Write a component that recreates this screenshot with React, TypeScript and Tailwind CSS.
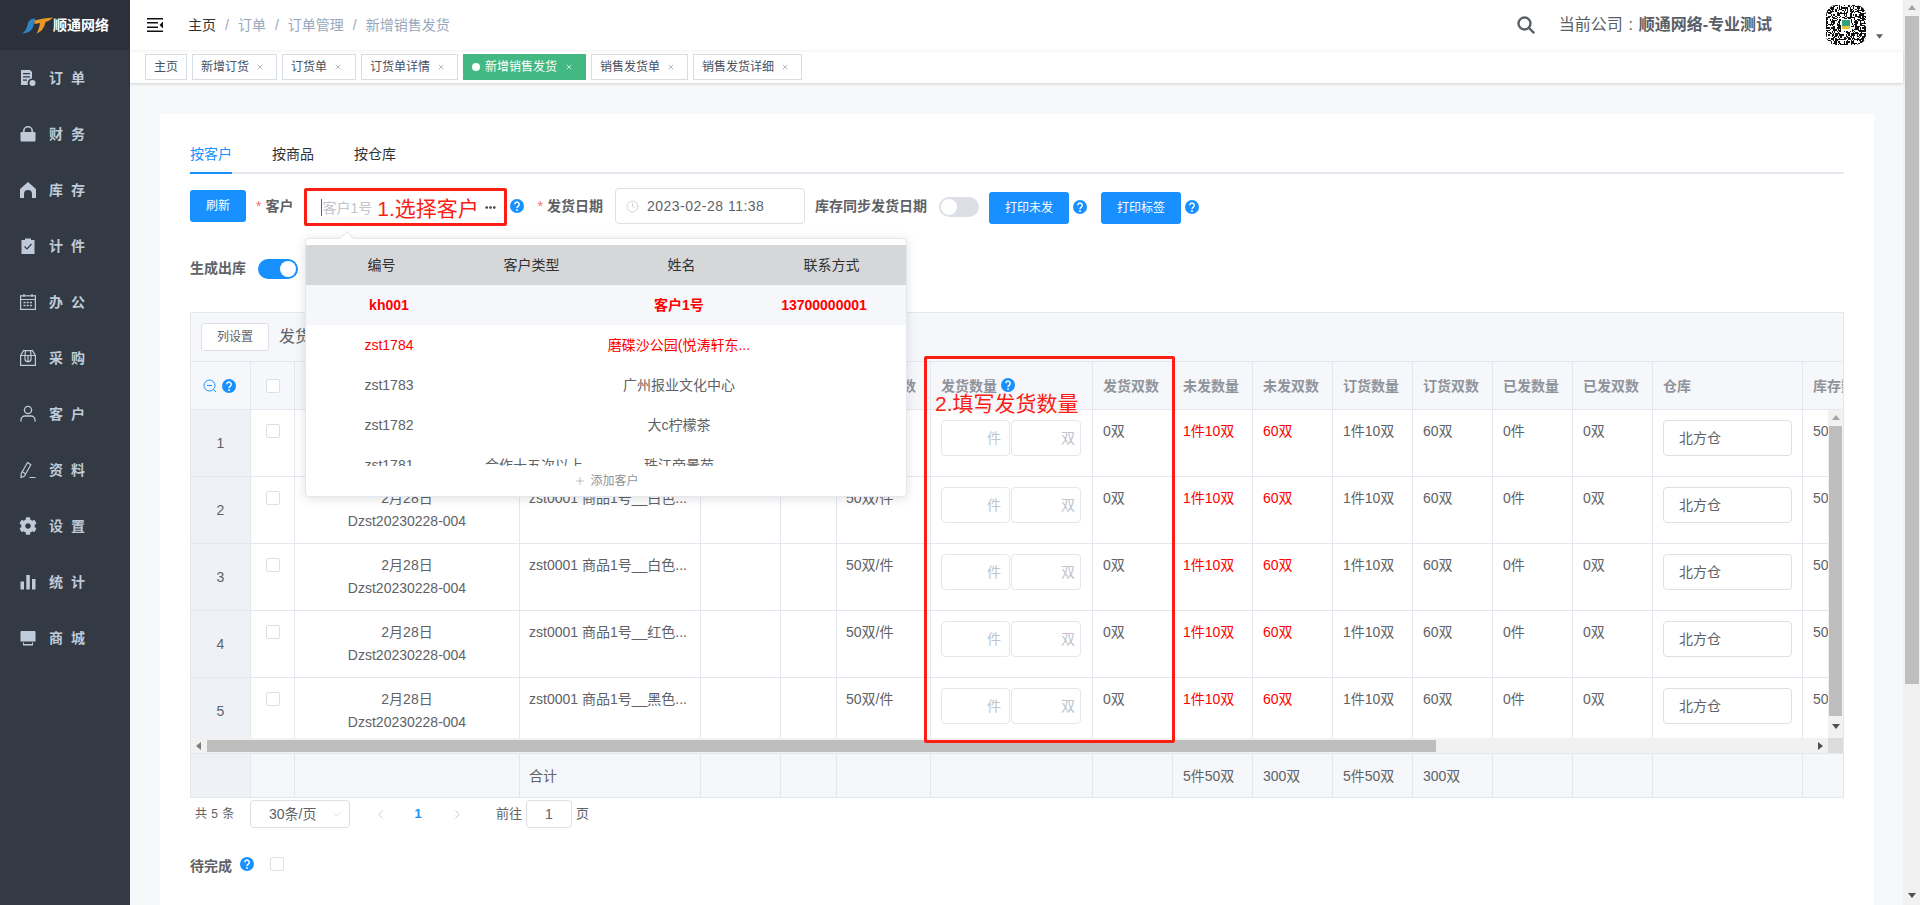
import { ChevronDown, ChevronLeft, ChevronRight, Clock, Ellipsis, Plus, X } from 'lucide-react';
import { FaCog } from 'react-icons/fa';

const GRID =
  'grid w-[1712px] grid-cols-[60px_44px_225px_181px_80px_56px_94px_162px_80px_80px_80px_80px_80px_80px_80px_150px_100px]';
const CELL = 'border-r border-b border-[#e4e7ed]';

const MENU: [string, React.ReactNode][] = [
  [
    '订单',
    <svg viewBox="0 0 18 18" className="w-[18px] h-[18px]" fill="currentColor">
      <path d="M2 1h9l2 2v6.5a4.5 4.5 0 0 0-4 6.5H2zM4 4v1.3h7V4zm0 3.2v1.3h7V7.200zm0 3.200v1.300h4v-1.300z" fillRule="evenodd" />
      <circle cx="13.500" cy="14" r="3" />
    </svg>,
  ],
  [
    '财务',
    <svg viewBox="0 0 18 18" className="w-[18px] h-[18px]" fill="currentColor">
      <path d="M4 7V6a5 5 0 0 1 10 0v1h-1.600V6a3.400 3.400 0 0 0-6.800 0v1z" />
      <rect x="1.500" y="7" width="15" height="9.500" rx="1" />
    </svg>,
  ],
  [
    '库存',
    <svg viewBox="0 0 18 18" className="w-[18px] h-[18px]" fill="currentColor">
      <path d="M9 1 17 8v9h-4v-4a4 4 0 0 0-8 0v4H1V8z" />
    </svg>,
  ],
  [
    '计件',
    <svg viewBox="0 0 18 18" className="w-[18px] h-[18px]" fill="none">
      <path d="M2.500 3H6V1.500h6V3h3.500v14h-13z" fill="currentColor" />
      <path d="m5.500 9.500 2.500 2.500 4.500-5" stroke="#333a44" strokeWidth="1.200" />
    </svg>,
  ],
  [
    '办公',
    <svg viewBox="0 0 18 18" className="w-[18px] h-[18px]" fill="none" stroke="currentColor" strokeWidth="1.200">
      <rect x="1.600" y="2.800" width="14.800" height="13.600" />
      <path d="M1.600 6.500h14.800M5 1v3M13 1v3" />
      <path d="M4.500 9.500h9M4.500 12.500h9" strokeWidth="1.600" strokeDasharray="2 1.200" />
    </svg>,
  ],
  [
    '采购',
    <svg viewBox="0 0 18 18" className="w-[18px] h-[18px]" fill="none" stroke="currentColor" strokeWidth="1.200">
      <path d="M1.600 6.500 4.500 1.600h9l2.900 4.900v9.900H1.600zM1.600 6.500h14.800" />
      <path d="M6.500 1.800 6 6.500v3.500a3 2.600 0 0 0 6 0V6.500l-.5-4.700M9 6.500v7" />
    </svg>,
  ],
  [
    '客户',
    <svg viewBox="0 0 18 18" className="w-[18px] h-[18px]" fill="none" stroke="currentColor" strokeWidth="1.300">
      <circle cx="9" cy="5" r="3.600" />
      <path d="M2 16.500v-1.500a4 4 0 0 1 4-4h6a4 4 0 0 1 4 4v1.500" />
    </svg>,
  ],
  [
    '资料',
    <svg viewBox="0 0 18 18" className="w-[18px] h-[18px]" fill="none" stroke="currentColor" strokeWidth="1.200">
      <path d="M8.500 1.500 11.800 3.800 5.500 15 2 16.500l.3-4z" />
      <path d="M2.800 10.500 7 13M10.500 16.500h6" />
    </svg>,
  ],
  ['设置', <FaCog className="w-[18px] h-[18px]" />],
  [
    '统计',
    <svg viewBox="0 0 18 18" className="w-[18px] h-[18px]" fill="currentColor">
      <rect x="1.500" y="8.500" width="3.500" height="8" />
      <rect x="7.300" y="2" width="3.500" height="14.500" />
      <rect x="13" y="6" width="3.500" height="10.500" />
    </svg>,
  ],
  [
    '商城',
    <svg viewBox="0 0 18 18" className="w-[18px] h-[18px]" fill="currentColor">
      <path d="M2.500 2h13a1 1 0 0 1 1 1v9.500h-15V3a1 1 0 0 1 1-1z" />
      <path d="M4 13.500h10V16.500H4zM5 13.500v1.500h8v-1.500z" fillRule="evenodd" />
    </svg>,
  ],
];

const HEADERS = ['未发数量', '未发双数', '订货数量', '订货双数', '已发数量', '已发双数'];
const COLORS = ['白色', '白色', '白色', '红色', '黑色'];

const CUSTOMERS = [
  { code: 'zst1784', type: '', name: '磨碟沙公园(悦涛轩东...', tone: 'text-[#ff0000]' },
  { code: 'zst1783', type: '', name: '广州报业文化中心', tone: 'text-[#606266]' },
  { code: 'zst1782', type: '', name: '大c柠檬茶', tone: 'text-[#606266]' },
  { code: 'zst1781', type: '合作十五次以上', name: '珠江帝景苑', tone: 'text-[#606266]' },
];

// fake qr pattern for the avatar
const QR: [number, number][] = [];
let seed = 17;
for (let y = 0; y < 34; y++) {
  for (let x = 0; x < 34; x++) {
    seed = (seed * 1103515245 + 12345) % 2147483648;
    if (seed % 100 < 55) QR.push([x, y]);
  }
}

function Help({ className = '' }: { className?: string }) {
  return (
    <svg viewBox="0 0 14 14" className={`w-[14px] h-[14px] shrink-0 ${className}`}>
      <circle cx="7" cy="7" r="7" fill="#1890ff" />
      <path d="M4.800 5.300a2.200 2.200 0 1 1 3.500 1.800c-.9.600-1.300 1-1.300 2" fill="none" stroke="#fff" strokeWidth="1.500" />
      <circle cx="7" cy="11" r=".9" fill="#fff" />
    </svg>
  );
}

function Switch({ on }: { on?: boolean }) {
  return (
    <div className={`w-[40px] h-[20px] rounded-full p-[2px] flex shrink-0 ${on ? 'bg-[#1890ff] justify-end' : 'bg-[#dcdfe6]'}`}>
      <div className="w-[16px] h-[16px] rounded-full bg-white" />
    </div>
  );
}

function Box() {
  return <div className="w-[14px] h-[14px] rounded-[2px] border border-[#dcdfe6] bg-white" />;
}

function PrimaryButton({ children, className = '' }: { children: React.ReactNode; className?: string }) {
  return (
    <button className={`h-[32px] rounded-[3px] bg-[#1890ff] text-white text-xs shrink-0 ${className}`}>{children}</button>
  );
}

function Tab({ label, wide }: { label: string; wide?: boolean }) {
  return (
    <div className={`h-[26px] border border-[#d8dce5] bg-white pl-[8px] flex items-center text-xs text-[#495060] ${wide ? 'pr-[9px]' : 'pr-[8px]'}`}>
      {label}
      <span className="ml-[3px] w-[16px] flex justify-center text-[#909399]">
        <X size={8} />
      </span>
    </div>
  );
}

function Row({ index, color }: { index: number; color: string }) {
  return (
    <div className={`${GRID} h-[67px] text-[#606266]`}>
      <div className={`${CELL} bg-[#eef1f6] flex items-center justify-center`}>{index}</div>
      <div className={`${CELL} pl-[15px] pt-[14px]`}>
        <Box />
      </div>
      <div className={`${CELL} pt-[10px] text-center leading-[23px]`}>
        <div>2月28日</div>
        <div>Dzst20230228-004</div>
      </div>
      <div className={`${CELL} pl-[9px] pt-[10px] leading-[23px]`}>zst0001 商品1号__{color}...</div>
      <div className={CELL} />
      <div className={CELL} />
      <div className={`${CELL} pl-[9px] pt-[10px] leading-[23px]`}>50双/件</div>
      <div className={`${CELL} pl-[10px] pt-[10px] flex gap-[1px] items-start`}>
        <div className="w-[69px] h-[36px] rounded border border-[#e4e7ed] flex items-center justify-end pr-[8px] text-[#c0c4cc]">件</div>
        <div className="w-[70px] h-[36px] rounded border border-[#e4e7ed] flex items-center justify-end pr-[5px] text-[#c0c4cc]">双</div>
      </div>
      <div className={`${CELL} pl-[10px] pt-[10px] leading-[23px]`}>0双</div>
      <div className={`${CELL} pl-[10px] pt-[10px] leading-[23px] text-[#ff0000]`}>1件10双</div>
      <div className={`${CELL} pl-[10px] pt-[10px] leading-[23px] text-[#ff0000]`}>60双</div>
      <div className={`${CELL} pl-[10px] pt-[10px] leading-[23px]`}>1件10双</div>
      <div className={`${CELL} pl-[10px] pt-[10px] leading-[23px]`}>60双</div>
      <div className={`${CELL} pl-[10px] pt-[10px] leading-[23px]`}>0件</div>
      <div className={`${CELL} pl-[10px] pt-[10px] leading-[23px]`}>0双</div>
      <div className={`${CELL} pl-[10px] pt-[10px]`}>
        <div className="w-[129px] h-[36px] rounded border border-[#dcdfe6] flex items-center pl-[15px]">北方仓</div>
      </div>
      <div className={`${CELL} pl-[10px] pt-[10px] leading-[23px]`}>50件</div>
    </div>
  );
}

function CustomerDropdown() {
  return (
    <div className="absolute left-[1px] top-[50px] z-20 w-[602px] h-[259px] bg-white border border-[#e4e7ed] rounded shadow-[0_2px_12px_rgba(0,0,0,0.12)] pt-[6px] text-sm font-normal">
      <div className="absolute left-[36px] -top-[6px] w-[10px] h-[10px] rotate-45 bg-white border-l border-t border-[#e4e7ed]" />
      <div className="relative grid grid-cols-4 h-[40px] bg-[#d6d7d9] text-[#303133] text-center leading-[40px]">
        <div>编号</div>
        <div>客户类型</div>
        <div>姓名</div>
        <div>联系方式</div>
      </div>
      <div className="h-[181px] overflow-hidden">
        <div className="grid grid-cols-4 h-[40px] bg-[#f5f7fa] px-[10px] text-center leading-[40px] text-[#ff0000] font-bold">
          <div>kh001</div>
          <div />
          <div>客户1号</div>
          <div>13700000001</div>
        </div>
        {CUSTOMERS.map((c) => (
          <div key={c.code} className={`grid grid-cols-4 h-[40px] px-[10px] text-center leading-[40px] ${c.tone}`}>
            <div>{c.code}</div>
            <div>{c.type}</div>
            <div>{c.name}</div>
            <div />
          </div>
        ))}
      </div>
      <div className="h-[30px] flex items-center justify-center gap-[4px] text-xs text-[#909399]">
        <Plus size={12} strokeWidth={1.2} />
        添加客户
      </div>
    </div>
  );
}

function Triangle({ dir, tone }: { dir: 'up' | 'down' | 'left' | 'right'; tone: string }) {
  const points = { up: '4,1 8,6 0,6', down: '0,1 8,1 4,6', left: '6,0 6,8 1,4', right: '1,0 1,8 6,4' }[dir];
  return (
    <svg viewBox="0 0 8 8" className="w-[8px] h-[8px]" fill={tone}>
      <polygon points={points} />
    </svg>
  );
}

export default function App() {
  return (
    <div className="flex w-[1920px] h-[905px] overflow-hidden bg-[#f7f8fa] text-sm text-[#606266] font-['Liberation_Sans','Noto_Sans_CJK_SC',sans-serif]">
      <aside className="w-[130px] shrink-0 bg-[#333a44] text-[#bfcbd9]">
        <div className="h-[50px] bg-[#2b303b] flex items-center pl-[22px]">
          <svg viewBox="0 0 31 17" className="w-[31px] h-[17px]">
            <path d="M0 16.500C3 15 4.500 12 5.500 8 6.500 3.500 9 1.500 13.500 1.500 12.500 4 12 6.500 11 10 10 13.500 6 16.500 0 16.500z" fill="#2f86c4" />
            <path d="M12.500 3.500C18 2 25 .8 31 .5 29 2.800 26.500 4.200 23.500 5 22.500 9.500 20.500 14.500 14.500 16.500 16.500 13 17.500 9.500 18 6 16.500 6.200 14.500 6.500 12.500 7z" fill="#e8962a" />
          </svg>
          <span className="text-white font-bold leading-none">顺通网络</span>
        </div>
        {MENU.map(([label, icon]) => (
          <div key={label} className="h-[56px] flex items-center pl-[19px]">
            <span className="w-[30px] shrink-0">{icon}</span>
            <span className="font-bold tracking-[8px] whitespace-nowrap">{label}</span>
          </div>
        ))}
      </aside>

      <main className="w-[1773px] shrink-0 flex flex-col">
        <header className="relative z-10 h-[50px] bg-white shadow-[0_1px_3px_rgba(0,21,41,0.06)] flex items-center pl-[17px]">
          <svg viewBox="0 0 16 14" className="w-[16px] h-[14px]" fill="#111">
            <rect width="16" height="1.500" />
            <rect y="4" width="11" height="1.500" />
            <rect y="8.500" width="11" height="1.500" />
            <polygon points="16,3.500 12.500,7 16,10.500" />
            <rect y="12.500" width="16" height="1.500" />
          </svg>
          <nav className="ml-[25px] flex text-[#97a8be]">
            <span className="text-[#303133]">主页</span>
            <span className="mx-[9px]">/</span>
            <span>订单</span>
            <span className="mx-[9px]">/</span>
            <span>订单管理</span>
            <span className="mx-[9px]">/</span>
            <span>新增销售发货</span>
          </nav>
          <div className="ml-auto flex items-center text-[#5a5e66]">
            <svg viewBox="0 0 18 18" className="w-[18px] h-[18px]" fill="none" stroke="#5a5e66" strokeWidth="2.400">
              <circle cx="7.500" cy="7.500" r="6" />
              <path d="m12 12 5.200 5.200" />
            </svg>
            <span className="ml-[24px] text-base">当前公司</span>
            <span className="w-[16px] text-center text-base">:</span>
            <span className="text-base font-bold">顺通网络-专业测试</span>
            <div className="ml-[54px] w-[40px] h-[40px] rounded-[10px] overflow-hidden">
              <svg viewBox="0 0 34 34" className="w-[40px] h-[40px]" shapeRendering="crispEdges">
                <rect width="34" height="34" fill="#fff" />
                {QR.map(([x, y]) => (
                  <rect key={`${x}-${y}`} x={x} y={y} width="1" height="1" fill="#111" />
                ))}
                <rect x="13" y="12" width="8" height="10" fill="#fff" />
                <rect x="14" y="13" width="6" height="5" fill="#2fa37c" />
                <rect x="14" y="18" width="6" height="2" fill="#e8c53a" />
              </svg>
            </div>
            <svg viewBox="0 0 8 5" className="ml-[10px] mt-[22px] mr-[20px] w-[7px] h-[5px]" fill="#5a5e66">
              <polygon points="0,0 8,0 4,5" />
            </svg>
          </div>
        </header>

        <div className="relative h-[33px] bg-white shadow-[0_1px_3px_rgba(0,0,0,0.16)] pl-[15px] pt-[4px] flex gap-[5px] items-start">
          <div className="h-[26px] border border-[#d8dce5] px-[8px] flex items-center text-xs text-[#495060]">主页</div>
          <Tab label="新增订货" />
          <Tab label="订货单" wide />
          <Tab label="订货单详情" />
          <div className="h-[26px] border border-[#42b983] bg-[#42b983] text-white pl-[8px] pr-[8px] flex items-center text-xs">
            <span className="w-[8px] h-[8px] rounded-full bg-white mr-[5px]" />
            新增销售发货
            <span className="ml-[4px] w-[16px] flex justify-center">
              <X size={8} />
            </span>
          </div>
          <Tab label="销售发货单" />
          <Tab label="销售发货详细" />
        </div>

        <div className="flex-1 min-h-0 pt-[31px] pl-[30px] pr-[29px]">
          <section className="h-full bg-white px-[30px] pt-[26px]">
            <div className="flex gap-[40px] h-[34px] border-b-2 border-[#e4e7ed] text-[#303133] leading-[28px]">
              <div className="h-[34px] border-b-2 border-[#1890ff] text-[#1890ff]">按客户</div>
              <div>按商品</div>
              <div>按仓库</div>
            </div>

            <div className="mt-[14px] h-[36px] flex items-center font-bold">
              <PrimaryButton className="w-[56px] font-normal">刷新</PrimaryButton>
              <span className="ml-[10px] mr-[4px] text-[#f56c6c] font-normal">*</span>
              <span>客户</span>
              <div className="relative ml-[11px] w-[203px] h-[38px] self-start">
                <div className="h-[38px] border-[3px] border-[#fa1e14] rounded-[2px] flex items-center pl-[14px] font-normal">
                  <span className="w-[1px] h-[17px] bg-[#606266]" />
                  <span className="mt-[2px] text-[#c0c4cc]">客户1号</span>
                  <span className="ml-[5px] mt-[4px] text-[21px] leading-[28px] text-[#fa1e14] whitespace-nowrap">1.选择客户</span>
                  <Ellipsis size={13} strokeWidth={3} className="ml-[5px] text-[#303133]" />
                </div>
                <CustomerDropdown />
              </div>
              <Help className="ml-[3px]" />
              <span className="ml-[13px] mr-[4px] text-[#f56c6c] font-normal">*</span>
              <span>发货日期</span>
              <div className="ml-[12px] w-[190px] h-[36px] border border-[#dcdfe6] rounded flex items-center pl-[10px] font-normal">
                <Clock size={13} strokeWidth={1.3} className="text-[#c0c4cc]" />
                <span className="ml-[8px] tracking-[0.5px]">2023-02-28 11:38</span>
              </div>
              <span className="ml-[10px]">库存同步发货日期</span>
              <div className="ml-[12px] mt-[2px]">
                <Switch />
              </div>
              <PrimaryButton className="ml-[10px] mt-[4px] w-[80px] font-normal">打印未发</PrimaryButton>
              <Help className="ml-[4px] mt-[2px]" />
              <PrimaryButton className="ml-[14px] mt-[4px] w-[80px] font-normal">打印标签</PrimaryButton>
              <Help className="ml-[4px] mt-[2px]" />
            </div>

            <div className="mt-[34px] h-[22px] flex items-center">
              <span className="font-bold mb-[2px]">生成出库</span>
              <div className="ml-[12px]">
                <Switch on />
              </div>
            </div>

            <div className="relative mt-[32px] w-[1654px] border border-[#e4e7ed]">
              <div className="h-[49px] bg-[#f5f7fa] border-b border-[#e4e7ed] flex items-center pl-[10px]">
                <div className="w-[68px] h-[28px] bg-white border border-[#dcdfe6] rounded-[3px] flex items-center justify-center text-xs">列设置</div>
                <span className="ml-[10px] text-base">发货明细</span>
              </div>

              <div className="overflow-hidden">
                <div className={`${GRID} h-[48px] bg-[#f5f7fa] font-bold text-[#909399]`}>
                  <div className={`${CELL} flex items-center gap-[5px] pl-[12px]`}>
                    <svg viewBox="0 0 14 14" className="w-[14px] h-[14px]" fill="none" stroke="#1890ff" strokeWidth="1">
                      <circle cx="6.500" cy="6.500" r="5.500" />
                      <path d="M4 6.500h5M10.500 10.500l2.500 2.500" />
                    </svg>
                    <Help />
                  </div>
                  <div className={`${CELL} pl-[15px] flex items-center`}>
                    <Box />
                  </div>
                  <div className={CELL} />
                  <div className={CELL} />
                  <div className={CELL} />
                  <div className={CELL} />
                  <div className={`${CELL} pl-[9px] flex items-center whitespace-nowrap`}>每件装双数</div>
                  <div className={`${CELL} pl-[10px] flex items-center gap-[4px]`}>
                    发货数量
                    <Help className="-mt-[2px]" />
                  </div>
                  <div className={`${CELL} pl-[10px] flex items-center`}>发货双数</div>
                  {HEADERS.map((h) => (
                    <div key={h} className={`${CELL} pl-[10px] flex items-center`}>
                      {h}
                    </div>
                  ))}
                  <div className={`${CELL} pl-[10px] flex items-center`}>仓库</div>
                  <div className={`${CELL} pl-[10px] flex items-center`}>库存数量</div>
                </div>

                <div className="relative h-[328px] overflow-hidden">
                  {COLORS.map((color, i) => (
                    <Row key={i} index={i + 1} color={color} />
                  ))}
                  <div className="absolute right-0 top-0 bottom-0 w-[15px] bg-[#f1f1f1] flex flex-col items-center">
                    <div className="h-[16px] flex items-center justify-center">
                      <Triangle dir="up" tone="#a3a3a3" />
                    </div>
                    <div className="w-[13px] h-[290px] bg-[#bebebe]" />
                    <div className="flex-1 flex items-center justify-center">
                      <Triangle dir="down" tone="#505050" />
                    </div>
                  </div>
                </div>

                <div className="h-[16px] bg-[#f1f1f1] flex border-b border-[#e4e7ed]">
                  <div className="w-[16px] flex items-center justify-center">
                    <Triangle dir="left" tone="#7a7a7a" />
                  </div>
                  <div className="w-[1229px] h-[12px] mt-[2px] bg-[#bebebe]" />
                  <div className="flex-1 flex items-center justify-end pr-[3px]">
                    <Triangle dir="right" tone="#505050" />
                  </div>
                  <div className="w-[15px] bg-[#dcdcdc]" />
                </div>

                <div className={`${GRID} h-[43px] bg-[#f5f7fa]`}>
                  {Array.from({ length: 17 }).map((_, i) => {
                    const text: Record<number, string> = { 3: '合计', 9: '5件50双', 10: '300双', 11: '5件50双', 12: '300双' };
                    return (
                      <div key={i} className={`border-r border-[#e4e7ed] flex items-center ${i === 3 ? 'pl-[9px]' : 'pl-[10px]'} ${i === 0 ? 'bg-[#eef1f6]' : ''}`}>
                        {text[i]}
                      </div>
                    );
                  })}
                </div>
              </div>

              <div className="absolute left-[733px] top-[43px] z-10 w-[251px] h-[387px] border-[3px] border-[#fa1e14] rounded-[2px] pl-[8px] pt-[31px] text-[21px] leading-[28px] text-[#fa1e14] whitespace-nowrap">
                2.填写发货数量
              </div>
            </div>

            <div className="mt-[2px] h-[28px] flex items-center text-[13px]">
              <span className="ml-[5px] w-[55px] text-xs [word-spacing:1px]">共 5 条</span>
              <div className="w-[100px] h-[28px] border border-[#dcdfe6] rounded flex items-center pl-[18px] pr-[6px] justify-between text-sm">
                30条/页
                <ChevronDown size={13} strokeWidth={1} className="text-[#c0c4cc]" />
              </div>
              <span className="ml-[15px] w-[30px] flex justify-center text-[#c0c4cc]">
                <ChevronLeft size={15} strokeWidth={1.5} />
              </span>
              <span className="ml-[8px] w-[30px] text-center text-[#1890ff] font-bold">1</span>
              <span className="ml-[9px] w-[30px] flex justify-center text-[#c0c4cc]">
                <ChevronRight size={15} strokeWidth={1.5} />
              </span>
              <span className="ml-[24px]">前往</span>
              <div className="ml-[4px] w-[46px] h-[28px] border border-[#dcdfe6] rounded flex items-center justify-center text-sm">1</div>
              <span className="ml-[4px]">页</span>
            </div>

            <div className="mt-[27px] h-[22px] flex items-center">
              <span className="font-bold">待完成</span>
              <Help className="ml-[8px] -mt-[4px]" />
              <div className="ml-[16px] -mt-[4px]">
                <Box />
              </div>
            </div>
          </section>
        </div>
      </main>

      <div className="w-[17px] shrink-0 bg-[#f1f1f1] flex flex-col items-center">
        <div className="h-[16px] flex items-center justify-center">
          <Triangle dir="up" tone="#a3a3a3" />
        </div>
        <div className="w-[14px] h-[668px] bg-[#bebebe]" />
        <div className="flex-1 flex items-end justify-center pb-[5px]">
          <Triangle dir="down" tone="#505050" />
        </div>
      </div>
    </div>
  );
}
